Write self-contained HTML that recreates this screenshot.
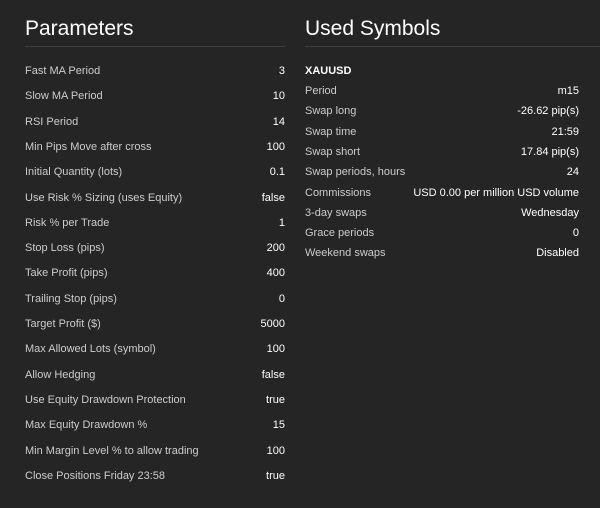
<!DOCTYPE html><html><head><style>
body{margin:0;background:#252525;width:600px;height:508px;overflow:hidden;font-family:"Liberation Sans",sans-serif;color:#ccc;font-size:11px}
h2{position:absolute;top:16px;margin:0;font-weight:normal;font-size:21px;color:#fff;line-height:26px}
.hr{position:absolute;top:46px;height:1px;background:#3e3e3e}
.r{position:absolute;height:14px;line-height:14px;display:flex;justify-content:space-between}
.r b{font-weight:normal;color:#fff}
</style></head><body>
<h2 style="left:25px">Parameters</h2><div class="hr" style="left:25px;width:260px"></div>
<h2 style="left:305px">Used Symbols</h2><div class="hr" style="left:305px;width:295px"></div>
<div id="L"></div>
<div class="r" style="left:305px;width:274px;top:64px"><b style="font-weight:bold">XAUUSD</b></div>
<script>
var L=[["Fast MA Period","3"],["Slow MA Period","10"],["RSI Period","14"],["Min Pips Move after cross","100"],["Initial Quantity (lots)","0.1"],["Use Risk % Sizing (uses Equity)","false"],["Risk % per Trade","1"],["Stop Loss (pips)","200"],["Take Profit (pips)","400"],["Trailing Stop (pips)","0"],["Target Profit ($)","5000"],["Max Allowed Lots (symbol)","100"],["Allow Hedging","false"],["Use Equity Drawdown Protection","true"],["Max Equity Drawdown %","15"],["Min Margin Level % to allow trading","100"],["Close Positions Friday 23:58","true"]];
var R=[["Period","m15"],["Swap long","-26.62 pip(s)"],["Swap time","21:59"],["Swap short","17.84 pip(s)"],["Swap periods, hours","24"],["Commissions","USD 0.00 per million USD volume"],["3-day swaps","Wednesday"],["Grace periods","0"],["Weekend swaps","Disabled"]];
var h="";
L.forEach(function(a,i){h+='<div class="r" style="left:25px;width:260px;top:'+(64+i*25.3).toFixed(1)+'px"><span>'+a[0]+'</span><b>'+a[1]+'</b></div>'});
R.forEach(function(a,i){h+='<div class="r" style="left:305px;width:274px;top:'+(84+i*20.3).toFixed(1)+'px"><span>'+a[0]+'</span><b>'+a[1]+'</b></div>'});
document.getElementById("L").innerHTML=h;
</script>
</body></html>
